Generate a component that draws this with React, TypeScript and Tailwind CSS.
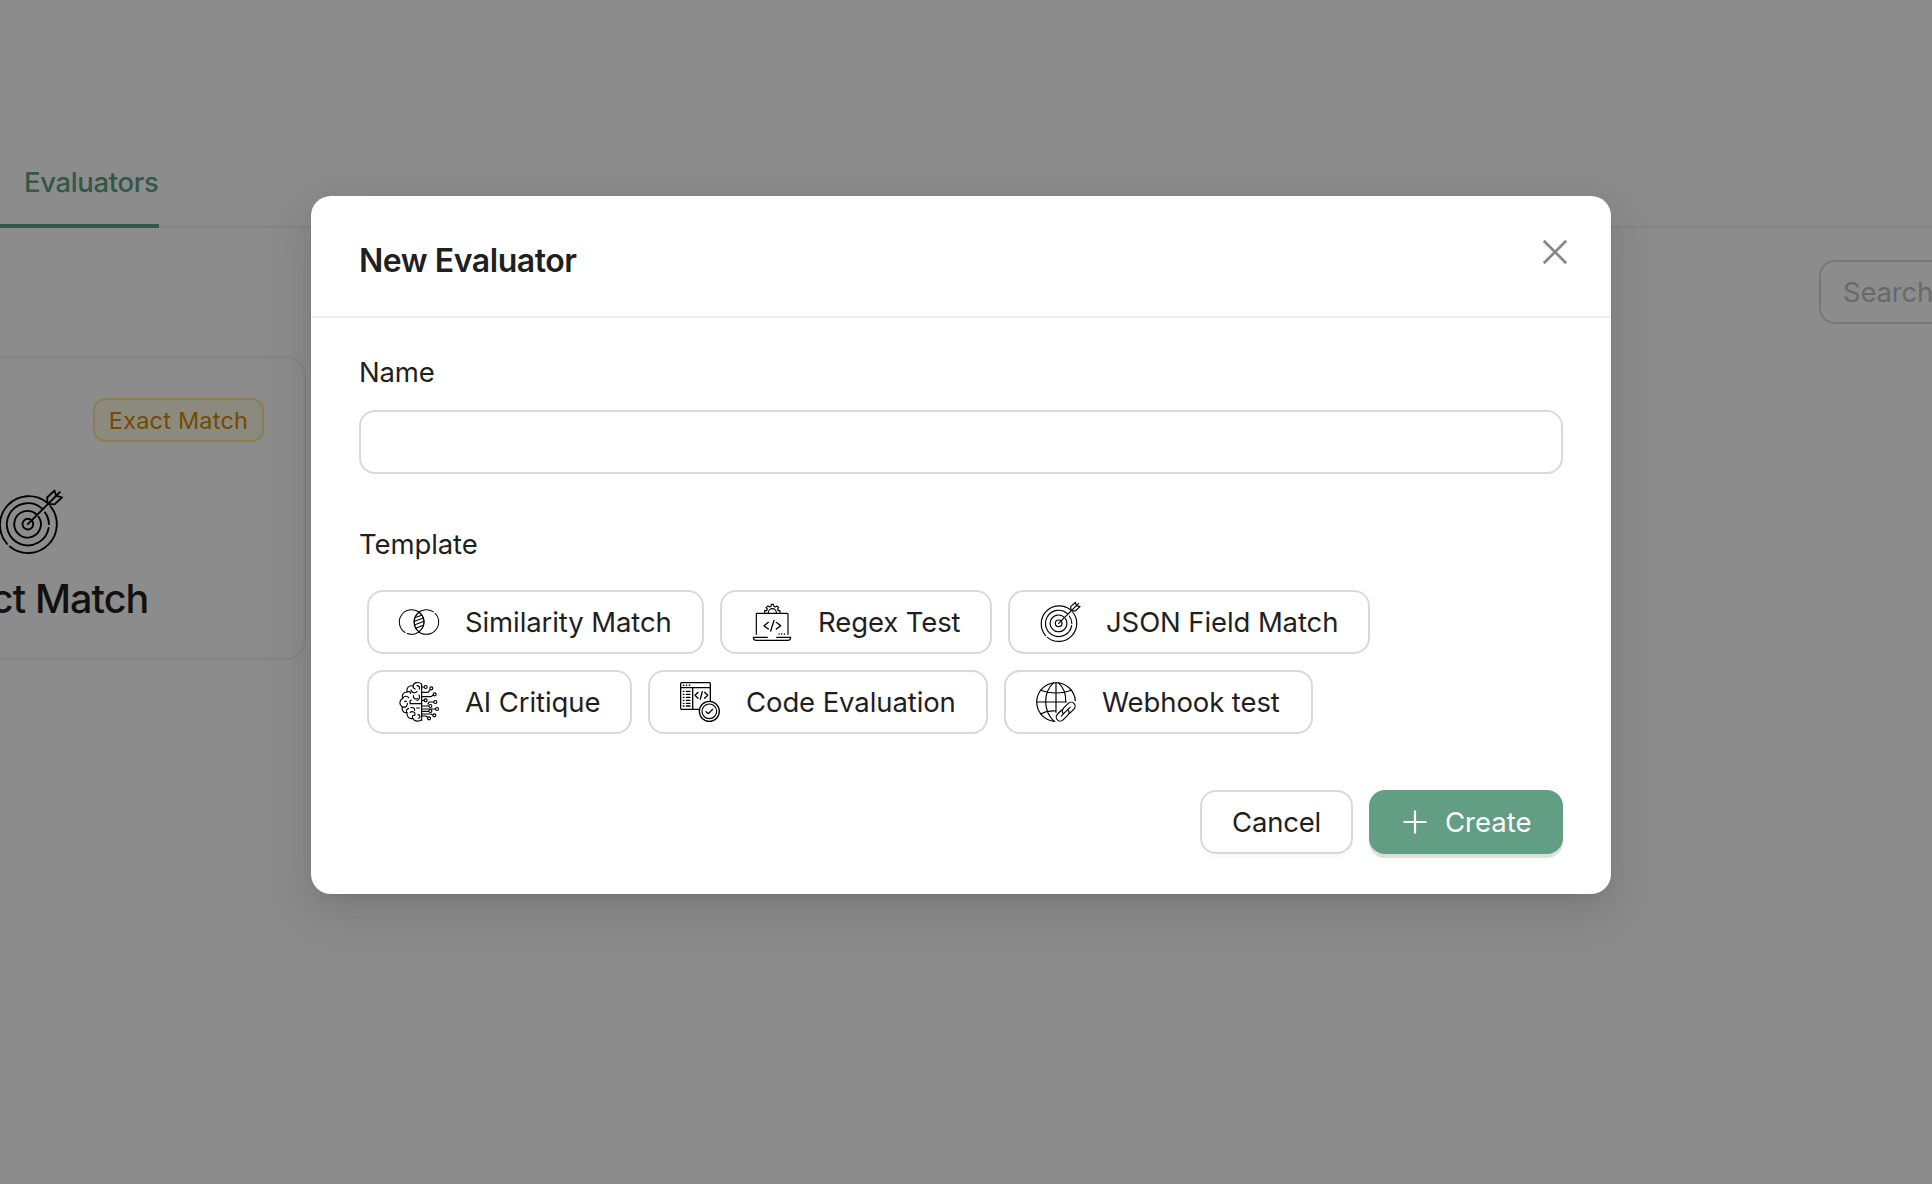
import type { ReactNode } from "react";

function Icon({ children, className = "size-10" }: { children: ReactNode; className?: string }) {
  return (
    <svg
      viewBox="0 0 120 120"
      className={`${className} shrink-0 overflow-visible`}
      fill="none"
      stroke="#000"
      strokeWidth="3.5"
      strokeLinecap="round"
      strokeLinejoin="round"
    >
      {children}
    </svg>
  );
}

function SimilarityIcon() {
  return (
    <Icon>
      <g strokeWidth="3" strokeDasharray="223.5 9">
        <circle cx="38" cy="60" r="37" transform="rotate(122 38 60)" />
        <circle cx="82" cy="60" r="37" transform="rotate(-44 82 60)" />
      </g>
      <path d="M60 31C80 46 80 74 60 89C41 74 41 46 60 31Z" strokeWidth="3" />
      <path d="M51 46L68 40M46 58L74 48M46 69L75 58M50 79L73 70" strokeWidth="3.4" />
    </Icon>
  );
}

function BrainIcon() {
  const nodes = [
    [80, 15], [97, 19], [107, 37], [80, 55], [109, 60],
    [94, 72], [114, 81], [94, 87], [106, 100], [90, 109],
  ];
  return (
    <Icon>
      <path d="M68 6V115M68 6C58-2 44 1 42 12C30 9 21 18 24 30C12 31 7 41 11 49C0 56 0 68 10 75C6 86 15 93 24 92C22 104 31 112 41 109C46 119 60 120 68 113" />
      <path d="M42 12C42 18 45 20 49 21M24 30C29 27 34 29 35 34M54 11C60 11 63 15 61 21M36 24C38 32 47 35 54 29M11 49C15 41 25 41 29 47M43 41C42 48 49 54 55 49M60 39C64 46 60 54 54 55M10 75C20 77 26 72 25 64M33 65H68M35 65C31 60 32 56 37 54M24 92C20 87 23 81 29 79M36 77C42 75 48 79 47 85M53 78H61M34 91C41 86 49 91 48 98M41 109C38 103 42 99 47 100M57 98C64 98 65 106 59 109M17 58H22" />
      <path d="M68 15H75M68 31H87L94 23M68 44H96L103 39M68 55H75M87 66L90 60H104M68 72H89M68 81H109M68 88H89M68 96H96L101 99M68 102H80L86 106" />
      {nodes.map(([cx, cy]) => (
        <circle key={`${cx}-${cy}`} cx={cx} cy={cy} r="4.500" fill="#fff" />
      ))}
    </Icon>
  );
}

function LaptopIcon() {
  return (
    <Icon>
      <path d="M13 97V36Q13 34 15 34H105Q108 34 108 37V97" />
      <path d="M46 106H4Q4 115 11 115H109Q116 115 116 106H74" />
      <path d="M38 32V26H44L46 21L42 17L48 12L53 15L57 13L58 7H64L66 13L70 15L75 12L80 17L77 21L79 26H84V32M49 32A12 12 0 0 1 73 32" />
      <g strokeWidth="4">
        <path d="M49 61L36 71L49 81M73 61L86 71L73 81M66 55L56 87" />
        <path d="M81 96H81.500M89 96H89.500M97 96H97.500" />
      </g>
    </Icon>
  );
}

function TargetIcon({ className }: { className?: string }) {
  return (
    <Icon className={className}>
      <path d="M17 101A54 54 0 0 1 91 23M98 30A54 54 0 0 1 22 106" />
      <path d="M95 71A39.500 39.500 0 1 1 82 34.500M88 42A39.500 39.500 0 0 1 95.500 64" />
      <path d="M72 45.500A25 25 0 1 0 76 50" />
      <circle cx="56" cy="64" r="10" />
      <path d="M56 64L116 4M93 26L92 14L106 1L109 11M109 11L120 14L106 27L93 26" />
    </Icon>
  );
}

function CodeIcon() {
  return (
    <Icon>
      <path d="M58 82H4Q2 82 2 79V5Q2 2 5 2H88Q91 2 91 5V58M2 17H91M38 17V82" strokeWidth="4" />
      <path d="M10 10H11M19 10H20M28 10H29" strokeWidth="4.500" />
      <path d="M10 28H12M19 28H30M10 37H12M19 37H30M10 46H12M19 46H30M10 55H12M19 55H30M10 64H12M19 64H30M10 72H12M19 72H30" strokeWidth="4" />
      <path d="M54 31L45 40L54 49M74 31L83 40L74 49M67 29L61 51" strokeWidth="4" />
      <circle cx="88" cy="88" r="30" fill="#fff" strokeWidth="4" />
      <circle cx="88" cy="88" r="22" />
      <path d="M78 89L85 95L98 82" strokeWidth="4" />
    </Icon>
  );
}

function GlobeIcon() {
  return (
    <Icon>
      <path d="M118 56A58 58 0 1 0 56 118" />
      <path d="M60 2V91M2 60H91M53 2C20 32 22 86 53 117M67 2C84 18 90 38 89 58M13 24C40 36 80 36 107 24M13 96C28 88 44 86 58 87" />
      <g transform="rotate(-45 89 89)">
        <path d="M84 77H66A12 12 0 0 0 66 101H86Q96 100 98 92M94 101H112A12 12 0 0 0 112 77H92Q82 78 80 86M70 89H108" />
      </g>
    </Icon>
  );
}

function TemplateButton({ icon, label, className }: { icon: ReactNode; label: string; className: string }) {
  return (
    <button
      className={`flex h-16 items-center rounded-2xl border-2 border-[#d9d9d9] bg-white pl-[30px] text-[27.500px] whitespace-nowrap ${className}`}
    >
      {icon}
      <span className="mt-0.5 ml-[26px] tracking-[-0.1px]">{label}</span>
    </button>
  );
}

function Background() {
  return (
    <div className="flex h-full flex-col bg-white">
      <nav className="flex h-[228px] shrink-0 items-end border-b-2 border-[#f0f0f0]">
        <div className="-mb-0.5 flex h-[78px] w-[159px] border-b-4 border-[#629e84] pl-6 text-[27.500px] leading-[64px] font-medium tracking-[-0.35px] text-[#629e84]">
          Evaluators
        </div>
      </nav>
      <div className="mt-8 flex h-16 shrink-0 justify-end">
        <div className="flex w-[113px] items-center overflow-hidden rounded-l-2xl border-2 border-r-0 border-[#d9d9d9] pt-0.5 pl-[22px] text-[27.500px] tracking-[-0.2px] text-[#bfbfbf]">
          Search
        </div>
      </div>
      <section className="mt-8 flex h-[304px] w-[306px] flex-col rounded-r-[20px] border-2 border-l-0 border-[#f0f0f0] pt-10">
        <div className="mr-10 flex h-11 w-[171px] items-center justify-center self-end rounded-xl border-2 border-[#ffe58f] bg-[#fffbe6] pt-0.5 text-[23.500px] tracking-[0.2px] whitespace-nowrap text-[#d48806]">
          Exact Match
        </div>
        <TargetIcon className="mt-12 -ml-0.5 size-16" />
        <h2 className="mt-5 flex w-[148.500px] justify-end text-[39.500px] leading-[50px] font-medium tracking-[-0.9px] whitespace-nowrap text-[#1f1f1f]">
          Exact Match
        </h2>
      </section>
    </div>
  );
}

function Modal() {
  return (
    <div
      role="dialog"
      className="mt-[196px] ml-[311px] h-[698px] w-[1300px] rounded-[20px] bg-white text-[#1f1f1f] shadow-[0_12px_32px_0_rgba(0,0,0,0.08),0_6px_12px_-8px_rgba(0,0,0,0.12),0_18px_56px_16px_rgba(0,0,0,0.05)]"
    >
      <header className="flex h-[122px] justify-between border-b-2 border-[#f0f0f0] pr-11 pl-12">
        <h1 className="mt-[41px] text-[32px] leading-[48px] font-semibold tracking-[-0.45px]">New Evaluator</h1>
        <svg viewBox="0 0 24 24" className="mt-11 size-6" stroke="#888" strokeWidth="2.800">
          <path d="M.8.8L23.200 23.200M23.200.8L.8 23.200" />
        </svg>
      </header>
      <div className="px-12 pt-8">
        <label className="block text-[27.500px] leading-[44px] tracking-[-0.2px]">Name</label>
        <input className="mt-4 block h-16 w-full rounded-2xl border-2 border-[#d9d9d9] outline-none" />
        <div className="mt-12 text-[27.500px] leading-[44px] tracking-[-0.1px]">Template</div>
        <div className="mt-6 flex flex-col gap-4 pl-2">
          <div className="flex gap-4">
            <TemplateButton icon={<SimilarityIcon />} label="Similarity Match" className="w-[337px]" />
            <TemplateButton icon={<LaptopIcon />} label="Regex Test" className="w-[272px]" />
            <TemplateButton icon={<TargetIcon />} label="JSON Field Match" className="w-[362px]" />
          </div>
          <div className="flex gap-4">
            <TemplateButton icon={<BrainIcon />} label="AI Critique" className="w-[265px]" />
            <TemplateButton icon={<CodeIcon />} label="Code Evaluation" className="w-[340px]" />
            <TemplateButton icon={<GlobeIcon />} label="Webhook test" className="w-[309px]" />
          </div>
        </div>
        <div className="mt-14 flex justify-end gap-4 text-[27.500px]">
          <button className="h-16 w-[153px] rounded-2xl border-2 border-[#d9d9d9] bg-white pt-0.5 tracking-[-0.2px] shadow-[0_4px_0_rgba(0,0,0,0.02)]">
            Cancel
          </button>
          <button className="flex h-16 w-[194px] items-center rounded-2xl bg-[#629e84] pl-[34px] text-white shadow-[0_4px_0_#dbe2dc]">
            <svg viewBox="0 0 24 24" className="size-6" stroke="#fff" strokeWidth="2.200">
              <path d="M12 .5V23.500M.5 12H23.500" />
            </svg>
            <span className="mt-0.5 ml-[18px]">Create</span>
          </button>
        </div>
      </div>
    </div>
  );
}

export default function App() {
  return (
    <main className="relative h-[1184px] w-[1932px] overflow-hidden font-['Inter',sans-serif]">
      <Background />
      <div className="absolute inset-0 flex items-start bg-black/45">
        <Modal />
      </div>
    </main>
  );
}
